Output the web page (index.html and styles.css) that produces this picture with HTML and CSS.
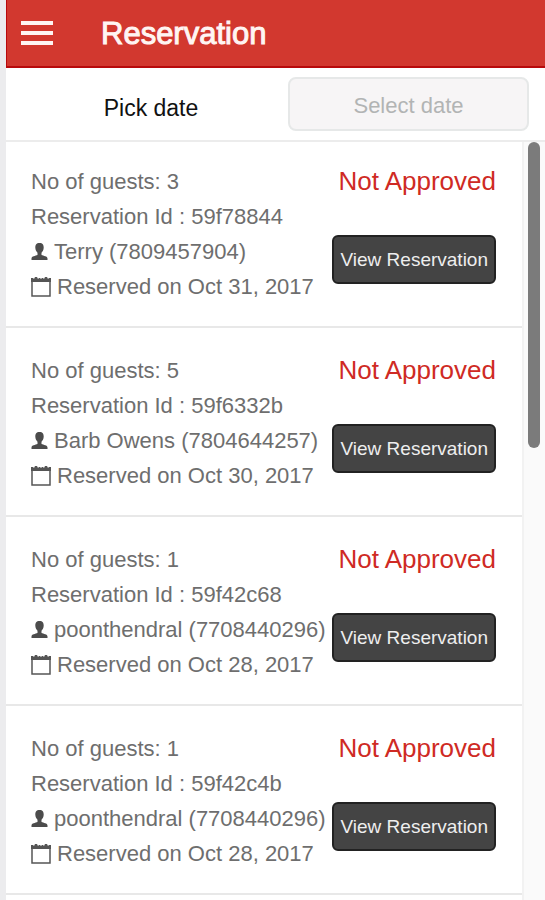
FILE: index.html
```html
<!DOCTYPE html>
<html lang="en">
<head>
<meta charset="utf-8">
<meta name="viewport" content="width=device-width, initial-scale=1">
<title>Reservation</title>
<link rel="stylesheet" href="styles.css">
</head>
<body>
<svg class="sprite" aria-hidden="true">
  <symbol id="person" viewBox="0 0 16 17">
    <path d="M8 0C4.800 0 3.800 2 3.800 4.600C3.800 7 5 8.800 6 9.800V12C4 13 0 13 0 15.500V17H16V15.500C16 13 12 13 10 12V9.800C11 8.800 12.200 7 12.200 4.600C12.200 2 11.200 0 8 0Z" fill="currentColor"/>
  </symbol>
  <symbol id="calendar" viewBox="0 0 20 20">
    <path d="M1 2V19H19V2" fill="none" stroke="currentColor" stroke-width="1.500"/>
    <path d="M0 1H2L3 2L4 0H6L7 2L8 1H9L10 2L11 1H12L13 2L14 0H16L17 2L18 1H20V5H0Z" fill="currentColor"/>
  </symbol>
</svg>
<div class="app">
  <header class="topbar">
    <button class="menu" type="button" aria-label="Menu">
      <svg width="32" height="24" viewBox="0 0 32 24"><path d="M0 2H32M0 12H32M0 22H32" stroke="currentColor" stroke-width="4"/></svg>
    </button>
    <h1 class="title">Reservation</h1>
  </header>
  <form class="filter">
    <label class="filter-label" for="date">Pick date</label>
    <input class="filter-input" id="date" type="text" placeholder="Select date">
  </form>
  <main class="content">
    <ul class="list">
      <li class="card">
        <div class="details">
          <p>No of guests: 3</p>
          <p>Reservation Id : 59f78844</p>
          <p class="with-icon"><svg class="person"><use href="#person"/></svg>Terry (7809457904)</p>
          <p class="with-icon"><svg class="calendar"><use href="#calendar"/></svg>Reserved on Oct 31, 2017</p>
        </div>
        <div class="side"><p class="status">Not Approved</p><button class="view" type="button">View Reservation</button></div>
      </li>
      <li class="card">
        <div class="details">
          <p>No of guests: 5</p>
          <p>Reservation Id : 59f6332b</p>
          <p class="with-icon"><svg class="person"><use href="#person"/></svg>Barb Owens (7804644257)</p>
          <p class="with-icon"><svg class="calendar"><use href="#calendar"/></svg>Reserved on Oct 30, 2017</p>
        </div>
        <div class="side"><p class="status">Not Approved</p><button class="view" type="button">View Reservation</button></div>
      </li>
      <li class="card">
        <div class="details">
          <p>No of guests: 1</p>
          <p>Reservation Id : 59f42c68</p>
          <p class="with-icon"><svg class="person"><use href="#person"/></svg>poonthendral (7708440296)</p>
          <p class="with-icon"><svg class="calendar"><use href="#calendar"/></svg>Reserved on Oct 28, 2017</p>
        </div>
        <div class="side"><p class="status">Not Approved</p><button class="view" type="button">View Reservation</button></div>
      </li>
      <li class="card">
        <div class="details">
          <p>No of guests: 1</p>
          <p>Reservation Id : 59f42c4b</p>
          <p class="with-icon"><svg class="person"><use href="#person"/></svg>poonthendral (7708440296)</p>
          <p class="with-icon"><svg class="calendar"><use href="#calendar"/></svg>Reserved on Oct 28, 2017</p>
        </div>
        <div class="side"><p class="status">Not Approved</p><button class="view" type="button">View Reservation</button></div>
      </li>
    </ul>
    <div class="rail"><div class="thumb"></div></div>
  </main>
</div>
</body>
</html>
```
FILE: styles.css
```css
* {
  box-sizing: border-box;
}

body {
  margin: 0;
  background: #fff;
  color: #6e6e6e;
  font-family: "Liberation Sans", Arial, sans-serif;
  font-size: 22px;
  line-height: 35px;
}

p, h1, ul {
  margin: 0;
  padding: 0;
}

button, input {
  font-family: inherit;
}

.sprite {
  display: none;
}

.app {
  display: flex;
  flex-direction: column;
  min-height: 100vh;
  border-left: 6px solid #ececee;
}

.topbar {
  display: flex;
  align-items: center;
  gap: 48px;
  height: 68px;
  padding-left: 14px;
  background: #d2382f;
  border-left: 1px solid #b80a0c;
  border-bottom: 2px solid #b80a0c;
  color: #fff5f3;
}

.menu {
  display: flex;
  padding: 0;
  border: 0;
  background: none;
  color: inherit;
}

.title {
  font-size: 31px;
  font-weight: 400;
  -webkit-text-stroke: 1px currentColor;
}

.filter {
  display: grid;
  grid-template-columns: 282px 1fr;
  align-items: center;
  padding: 9px 16px 9px 0;
  border-bottom: 2px solid #ececec;
}

.filter-label {
  padding: 8px 0 0 8px;
  text-align: center;
  color: #111;
  font-size: 23px;
}

.filter-input {
  width: 100%;
  height: 54px;
  padding: 4px 8px 0;
  border: 2px solid #e6e8e8;
  border-radius: 8px;
  background: #f7f5f6;
  color: #555;
  font-size: 22px;
  text-align: center;
}

.filter-input::placeholder {
  color: #b2b4b4;
  opacity: 1;
}

.content {
  display: grid;
  grid-template-columns: 1fr 23px;
  flex: 1;
}

.list {
  list-style: none;
}

.card {
  display: flex;
  justify-content: space-between;
  padding: 25px 26px 22px 25px;
  border-bottom: 2px solid #e8e8e8;
}

.card:first-child {
  padding-top: 22px;
}

.details {
  white-space: nowrap;
}

.with-icon {
  display: flex;
  align-items: center;
  gap: 6px;
}

.person {
  width: 17px;
  height: 17px;
  color: #4c4c4c;
}

.calendar {
  width: 20px;
  height: 20px;
  color: #555;
}

.side {
  display: flex;
  flex-direction: column;
  align-items: flex-end;
  gap: 36px;
  white-space: nowrap;
}

.status {
  color: #cf2a24;
  font-size: 26px;
}

.view {
  height: 49px;
  padding: 0 6px;
  border: 2px solid #222;
  border-radius: 6px;
  background: #444;
  color: #eee;
  font-size: 19px;
}

.rail {
  padding-left: 4px;
  border-left: 2px solid #f2f2f2;
  background: #fafafa;
}

.thumb {
  width: 12px;
  height: 306px;
  border-radius: 6px;
  background: #7b7b7b;
}
```
